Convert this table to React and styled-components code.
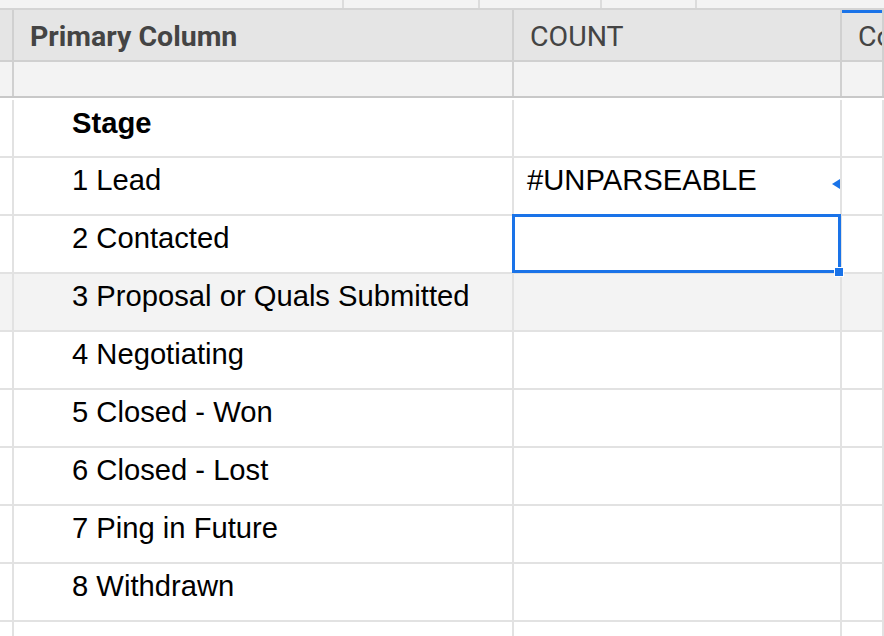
import React from "react";
import styled, { createGlobalStyle } from "styled-components";

const GlobalStyle = createGlobalStyle`
  html, body {
    margin: 0;
    padding: 0;
    background: #ffffff;
  }
  body {
    font-family: "Liberation Sans", Arial, sans-serif;
  }
`;

const stages = [
  { label: "Stage", bold: true },
  { label: "1 Lead", count: "#UNPARSEABLE", marker: true },
  { label: "2 Contacted", selected: true },
  { label: "3 Proposal or Quals Submitted", hover: true },
  { label: "4 Negotiating" },
  { label: "5 Closed - Won" },
  { label: "6 Closed - Lost" },
  { label: "7 Ping in Future" },
  { label: "8 Withdrawn" },
  { label: "" },
];

const topSegments = [344, 136, 122, 95];

const Sheet = () => {
  return (
    <Page>
      <GlobalStyle />
      <TopStrip>
        {topSegments.map((w, i) => (
          <TopSegment key={i} style={{ width: w }} />
        ))}
      </TopStrip>

      <HeaderRow>
        <Gutter $header />
        <HeadCell $bold $width="500px">Primary Column</HeadCell>
        <HeadCell $width="328px">COUNT</HeadCell>
        <HeadCell $active>Co</HeadCell>
      </HeaderRow>

      <FrozenRow>
        <Gutter $frozen />
        <FrozenCell $width="500px" />
        <FrozenCell $width="328px" />
        <FrozenCell />
      </FrozenRow>

      <Body>
        {stages.map((row, i) => (
          <Row key={i} $hover={row.hover}>
            <Gutter />
            <Cell $width="500px" $indent $bold={row.bold} $first={i === 0}>
              {row.label}
            </Cell>
            <Cell $width="328px" $first={i === 0}>
              {row.count}
              {row.marker && <Marker />}
              {row.selected && (
                <Selection>
                  <Handle />
                </Selection>
              )}
            </Cell>
            <Cell $first={i === 0} />
          </Row>
        ))}
      </Body>
    </Page>
  );
};

const Page = styled.div`
  width: 884px;
  height: 636px;
  overflow: hidden;
  background: #ffffff;
`;

const TopStrip = styled.div`
  display: flex;
  height: 8px;
  background: #f3f3f3;
  border-bottom: 2px solid #d4d4d4;
`;

const TopSegment = styled.div`
  flex-shrink: 0;
  border-right: 2px solid #dcdcdc;
  box-sizing: border-box;
`;

const HeaderRow = styled.div`
  display: flex;
  height: 50px;
  background: #e5e5e5;
  border-bottom: 2px solid #d0d0d0;
`;

const Gutter = styled.div`
  flex: 0 0 14px;
  box-sizing: border-box;
  border-right: 2px solid
    ${(p) => (p.$header || p.$frozen ? "#d0d0d0" : "#e2e2e2")};
`;

const HeadCell = styled.div`
  position: relative;
  flex: ${(p) => (p.$width ? `0 0 ${p.$width}` : "1 1 auto")};
  box-sizing: border-box;
  display: flex;
  align-items: center;
  padding: 3px 0 0 16px;
  border-right: 2px solid #d0d0d0;
  font-family: Roboto, "Liberation Sans", sans-serif;
  font-size: 28.5px;
  font-weight: ${(p) => (p.$bold ? 700 : 400)};
  color: #444444;
  white-space: nowrap;
  overflow: hidden;
  ${(p) =>
    p.$active &&
    `
    &::before {
      content: "";
      position: absolute;
      left: -2px;
      right: 0;
      top: 0;
      height: 3px;
      background: #1a73e8;
    }
  `}
`;

const FrozenRow = styled.div`
  display: flex;
  height: 34px;
  background: #f3f3f3;
  border-bottom: 2px solid #c8c8c8;
`;

const FrozenCell = styled.div`
  flex: ${(p) => (p.$width ? `0 0 ${p.$width}` : "1 1 auto")};
  box-sizing: border-box;
  border-right: 2px solid #d0d0d0;
`;

const Body = styled.div`
  padding-top: 2px;
`;

const Row = styled.div`
  display: flex;
  height: 56px;
  background: ${(p) => (p.$hover ? "#f3f3f3" : "#ffffff")};
  border-bottom: 2px solid #e2e2e2;
`;

const Cell = styled.div`
  position: relative;
  flex: ${(p) => (p.$width ? `0 0 ${p.$width}` : "1 1 auto")};
  box-sizing: border-box;
  padding: ${(p) => (p.$first ? "6px" : "5px")} 0 0
    ${(p) => (p.$indent ? "58px" : "13px")};
  border-right: 2px solid #e2e2e2;
  font-size: 29.2px;
  line-height: 34px;
  font-weight: ${(p) => (p.$bold ? 700 : 400)};
  color: #000000;
  white-space: nowrap;
`;

const Marker = styled.span`
  position: absolute;
  right: 0;
  top: 21px;
  width: 0;
  height: 0;
  border-top: 5.5px solid transparent;
  border-bottom: 5.5px solid transparent;
  border-right: 8px solid #1a73e8;
`;

const Selection = styled.div`
  position: absolute;
  left: -2px;
  top: -2px;
  width: 329px;
  height: 59px;
  box-sizing: border-box;
  border: 3px solid #1a73e8;
  z-index: 2;
`;

const Handle = styled.div`
  position: absolute;
  right: -6px;
  bottom: -7px;
  width: 8px;
  height: 8px;
  background: #1a73e8;
  border: 1.5px solid #ffffff;
`;

export default Sheet;
